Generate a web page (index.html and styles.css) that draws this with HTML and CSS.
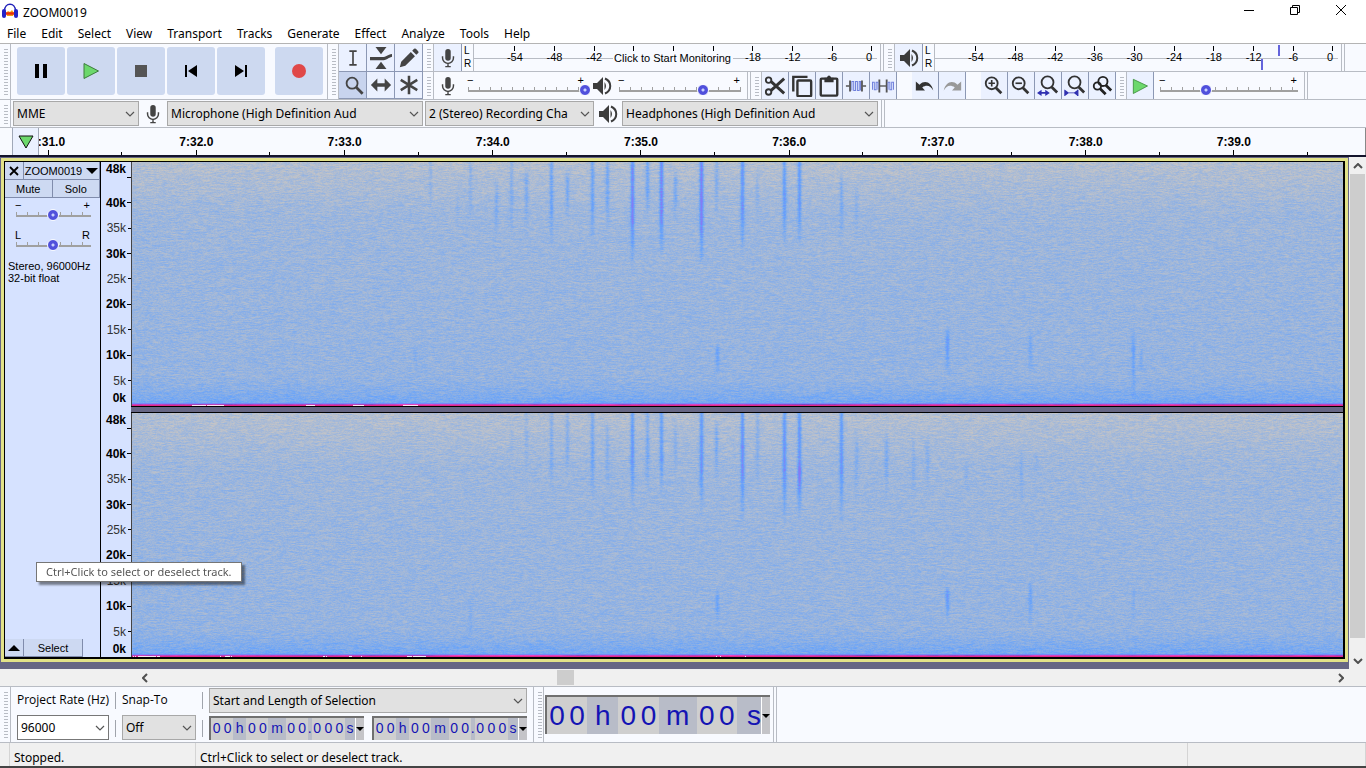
FILE: index.html
```html
<!DOCTYPE html>
<html lang="en">
<head>
    <meta charset="UTF-8">
    <meta name="viewport" content="width=device-width, initial-scale=1.0">
    <title>ZOOM0019</title>
    <link rel="stylesheet" href="styles.css">
</head>
<body>
    <!-- Shared icons -->
    <svg class="symbols" aria-hidden="true">
        <symbol id="mic" viewBox="0 0 20 22">
            <rect x="7" y="1" width="6" height="13" rx="3" fill="#444"/>
            <path d="M4 9v2a6 6 0 0 0 12 0V9M10 17v3M7 20.500h6" fill="none" stroke="#444" stroke-width="1.600"/>
        </symbol>
        <symbol id="speaker" viewBox="0 0 20 20">
            <path d="M1 7h4l6-6v18l-6-6H1z" fill="#3c3c3c"/>
            <path d="M12.500 6q3 4 0 8z" fill="#3c3c3c"/>
            <path d="M13 2.500c7 3 7 12 0 15" fill="none" stroke="#3c3c3c" stroke-width="2"/>
        </symbol>
        <symbol id="chevron" viewBox="0 0 10 6">
            <path d="M1 1l4 4 4-4" fill="none" stroke="#555" stroke-width="1.200"/>
        </symbol>
        <symbol id="glass" viewBox="0 0 24 24">
            <circle cx="9.500" cy="9" r="6.500" fill="none" stroke="#333" stroke-width="2"/>
            <path d="M14 14l6 6" stroke="#333" stroke-width="3"/>
        </symbol>
    </svg>

    <div class="app">
        <header class="titlebar">
            <svg class="logo" viewBox="0 0 16 16">
                <path d="M2.500 8c0-9 11-9 11 0" fill="#fff" stroke="#2020b8" stroke-width="1.600"/>
                <path d="M4 10l2-2 2 1 2-2 2 3-1 3H5z" fill="#f8a010"/>
                <path d="M4 10.500h8" stroke="#e83010" stroke-width="2.500"/>
                <rect x="0" y="6" width="4" height="9" rx="2" fill="#2424c8"/>
                <rect x="12" y="6" width="4" height="9" rx="2" fill="#2424c8"/>
            </svg>
            <span class="title">ZOOM0019</span>
            <button class="win-btn" aria-label="Minimize"><svg viewBox="0 0 12 12"><path d="M1 6.500h10" stroke="#000"/></svg></button>
            <button class="win-btn" aria-label="Restore"><svg viewBox="0 0 12 12"><path d="M1.500 3.500h7v7h-7zM3.500 3.500v-2h7v7h-2" fill="none" stroke="#000"/></svg></button>
            <button class="win-btn" aria-label="Close"><svg viewBox="0 0 12 12"><path d="M1 1l10 10M11 1L1 11" stroke="#000"/></svg></button>
        </header>

        <nav class="menu">
            <a href="#">File</a><a href="#">Edit</a><a href="#">Select</a><a href="#">View</a><a href="#">Transport</a><a href="#">Tracks</a><a href="#">Generate</a><a href="#">Effect</a><a href="#">Analyze</a><a href="#">Tools</a><a href="#">Help</a>
        </nav>

        <div class="toolbars">
            <div class="dock">
                <div class="bar">
                    <span class="grip"></span>
                    <div class="transport">
                        <button aria-label="Pause"><svg viewBox="0 0 16 16"><path d="M2 1h4v14H2zM10 1h4v14h-4z" fill="#000"/></svg></button>
                        <button aria-label="Play"><svg viewBox="0 0 16 16"><path d="M1 .5L15.500 8 1 15.500z" fill="#6cd86c" stroke="#3c7c3c"/></svg></button>
                        <button aria-label="Stop"><svg viewBox="0 0 16 16"><path d="M2 2h12v12H2z" fill="#555"/></svg></button>
                        <button aria-label="Skip to Start"><svg viewBox="0 0 16 16"><path d="M2 2h2v12H2zM14 2v12L5 8z" fill="#000"/></svg></button>
                        <button aria-label="Skip to End"><svg viewBox="0 0 16 16"><path d="M12 2h2v12h-2zM2 2v12l9-6z" fill="#000"/></svg></button>
                        <button class="record" aria-label="Record"><svg viewBox="0 0 16 16"><circle cx="8" cy="8" r="7" fill="#e04848"/></svg></button>
                    </div>
                </div>
                <div class="bar">
                    <span class="grip"></span>
                    <div class="tools">
                        <button class="tool" aria-label="Selection Tool"><svg viewBox="0 0 24 24"><path d="M8 4.500h3.500l.5.500.5-.5H16M12 5v14M8 19.500h3.500l.5-.5.5.500H16" fill="none" stroke="#444" stroke-width="1.800"/></svg></button>
                        <button class="tool" aria-label="Envelope Tool"><svg viewBox="0 0 24 24"><path d="M6 0h12l-6 8zM6 24h12l-6-8z" fill="#444"/><path d="M0 11h13c5 0 6-3 11-3.500v3c-4 1-6 4-11 4H0z" fill="#444"/></svg></button>
                        <button class="tool" aria-label="Draw Tool"><svg viewBox="0 0 24 24"><path d="M2 22l1.500-6L14 5.500l4.500 4.500L8 20.500zM15.500 4l2-2q1-1 2 0l2.500 2.500q1 1 0 2l-2 2z" fill="#444"/></svg></button>
                        <button class="tool active" aria-label="Zoom Tool"><svg viewBox="0 0 24 24"><circle cx="11" cy="10" r="6" fill="none" stroke="#444" stroke-width="2"/><path d="M15.500 14.500l7 7" stroke="#444" stroke-width="3"/></svg></button>
                        <button class="tool" aria-label="Time Shift Tool"><svg viewBox="0 0 24 24"><path d="M1 12l7-7v5h8V5l7 7-7 7v-5H8v5z" fill="#444"/></svg></button>
                        <button class="tool" aria-label="Multi-Tool"><svg viewBox="0 0 24 24"><path d="M12 2v20M3 6.500l18 11M21 6.500L3 17.500" stroke="#444" stroke-width="2.800"/></svg></button>
                    </div>
                </div>
                <div class="rows">
                    <div class="row">
                        <span class="grip"></span>
                        <button class="tool" aria-label="Record Meter"><svg><use href="#mic"/></svg></button>
                        <div class="lr"><span>L</span><span>R</span></div>
                        <div class="meter">
                            <span>-54</span><span>-48</span><span>-42</span><span></span><span></span><span></span><span>-18</span><span>-12</span><span>-6</span><span>0</span>
                            <button class="monitor">Click to Start Monitoring</button>
                        </div>
                        <span class="cap"></span>
                        <span class="grip"></span>
                        <button class="tool" aria-label="Playback Meter"><svg><use href="#speaker"/></svg></button>
                        <div class="lr"><span>L</span><span>R</span></div>
                        <div class="meter">
                            <span>-54</span><span>-48</span><span>-42</span><span>-36</span><span>-30</span><span>-24</span><span>-18</span><span>-12</span><span>-6</span><span>0</span>
                            <i class="peak left" style="left:85%"></i>
                            <i class="peak right" style="left:81%"></i>
                        </div>
                        <span class="cap"></span>
                    </div>
                    <div class="row">
                        <span class="grip"></span>
                        <span class="icon"><svg><use href="#mic"/></svg></span>
                        <div class="slider rec"><div><span>−</span><span>+</span></div><input type="range" aria-label="Recording Volume" value="100"></div>
                        <span class="icon spk"><svg><use href="#speaker"/></svg></span>
                        <div class="slider play"><div><span>−</span><span>+</span></div><input type="range" aria-label="Playback Volume" value="69"></div>
                        <span class="cap small"></span>
                        <span class="grip"></span>
                        <div class="edit spaced">
                            <button class="tool" aria-label="Cut"><svg viewBox="0 0 24 24"><path d="M7.500 7L22 20M7.500 17L22 4" stroke="#333" stroke-width="3.200"/><circle cx="5" cy="5.500" r="3" fill="none" stroke="#333" stroke-width="2"/><circle cx="5" cy="18.500" r="3" fill="none" stroke="#333" stroke-width="2"/></svg></button>
                            <button class="tool" aria-label="Copy"><svg viewBox="0 0 24 24"><rect x="7" y="6" width="15" height="17" rx="1" fill="none" stroke="#333" stroke-width="2.600"/><path d="M2.500 18V2H18" fill="none" stroke="#333" stroke-width="2.600"/></svg></button>
                            <button class="tool" aria-label="Paste"><svg viewBox="0 0 24 24"><rect x="3" y="4" width="18" height="18.500" rx="1" fill="none" stroke="#333" stroke-width="2.600"/><path d="M7 3h2.500q2.500-5 5 0H17v5H7z" fill="#333"/></svg></button>
                            <button class="tool" aria-label="Trim"><svg viewBox="0 0 24 24"><path d="M1 12h4M19 12h4" stroke="#555" stroke-width="1.500"/><path d="M5.500 6v12M18.500 6v12" stroke="#555" stroke-width="2"/><path d="M7.500 17V7h2v10h2V7h2v10h2V7h1.500v10" fill="none" stroke="#7080dc" stroke-width="1.100"/></svg></button>
                            <button class="tool" aria-label="Silence"><svg viewBox="0 0 24 24"><path d="M8 12h8" stroke="#555" stroke-width="1.500"/><path d="M8 5v14M16 5v14" stroke="#555" stroke-width="2"/><path d="M.5 16V8h2v8h2V8h2v8M17.500 16V8h2v8h2V8h2v8" fill="none" stroke="#7080dc" stroke-width="1.100"/></svg></button>
                        </div>
                        <div class="edit spaced">
                            <button class="tool" aria-label="Undo"><svg viewBox="0 0 24 24"><path d="M2 7v10h10l-3-3.500c5-3 9-2 12 3.500C19 8 12 5 6 10.500z" fill="#333"/></svg></button>
                            <button class="tool" aria-label="Redo"><svg viewBox="0 0 24 24"><path d="M22 7v10H12l3-3.500C10 10.500 6 11.500 3 17 5 8 12 5 18 10.500z" fill="#999"/></svg></button>
                        </div>
                        <div class="edit">
                            <button class="tool" aria-label="Zoom In"><svg viewBox="0 0 24 24"><use href="#glass"/><path d="M6 9h7M9.500 5.500v7" stroke="#333" stroke-width="1.800"/></svg></button>
                            <button class="tool" aria-label="Zoom Out"><svg viewBox="0 0 24 24"><use href="#glass"/><path d="M6 9h7" stroke="#333" stroke-width="1.800"/></svg></button>
                            <button class="tool" aria-label="Fit Selection"><svg viewBox="0 0 24 24"><use href="#glass" x="2" y="-1"/><path d="M0 19.500l5-3.500v2.500h4V16l5 3.500L9 23v-2.500H5V23z" fill="#3030b0"/></svg></button>
                            <button class="tool" aria-label="Fit Project"><svg viewBox="0 0 24 24"><use href="#glass" x="2" y="-1"/><path d="M0 16v7M15 16v7" stroke="#3030b0" stroke-width="1.500"/><path d="M1 16l4 3h6l4-3v7l-4-3H5l-4 3z" fill="#3030b0"/></svg></button>
                            <button class="tool" aria-label="Zoom Toggle"><svg viewBox="0 0 24 24"><circle cx="13" cy="7" r="5" fill="none" stroke="#222" stroke-width="2"/><circle cx="7" cy="12" r="4" fill="none" stroke="#222" stroke-width="2"/><path d="M16 11l6 6M10 15l6 6" stroke="#222" stroke-width="3"/></svg></button>
                        </div>
                        <span class="grip"></span>
                        <button class="tool narrow" aria-label="Play-at-Speed"><svg viewBox="0 0 24 24"><path d="M4 4l17 8-17 9z" fill="#6cd86c" stroke="#3c8c3c"/></svg></button>
                        <div class="slider speed"><div><span>−</span><span>+</span></div><input type="range" aria-label="Playback Speed" value="33"></div>
                        <span class="cap small"></span>
                    </div>
                </div>
            </div>
            <div class="row devices">
                <span class="grip"></span>
                <div class="combo host"><select aria-label="Audio Host"><option>MME</option></select><svg><use href="#chevron"/></svg></div>
                <span class="icon"><svg><use href="#mic"/></svg></span>
                <div class="combo input"><select aria-label="Recording Device"><option>Microphone (High Definition Aud</option></select><svg><use href="#chevron"/></svg></div>
                <div class="combo channels"><select aria-label="Recording Channels"><option>2 (Stereo) Recording Cha</option></select><svg><use href="#chevron"/></svg></div>
                <span class="icon"><svg><use href="#speaker"/></svg></span>
                <div class="combo output"><select aria-label="Playback Device"><option>Headphones (High Definition Aud</option></select><svg><use href="#chevron"/></svg></div>
                <span class="cap"></span>
            </div>
        </div>

        <div class="timeline">
            <button class="pin" aria-label="Pinned Play Head"><svg viewBox="0 0 16 14"><path d="M1 1h14L8 13z" fill="#6cd86c" stroke="#111"/></svg></button>
            <div class="times">
                <span>7:31.0</span><span>7:32.0</span><span>7:33.0</span><span>7:34.0</span><span>7:35.0</span><span>7:36.0</span><span>7:37.0</span><span>7:38.0</span><span>7:39.0</span>
            </div>
        </div>

        <main class="workspace">
            <div class="pane">
                <div class="track">
                    <div class="inner">
                        <section class="controls">
                            <div class="btn-row">
                                <button class="close" aria-label="Close Track"><svg viewBox="0 0 10 10"><path d="M1 1l8 8M9 1L1 9" stroke="#000" stroke-width="1.800"/></svg></button>
                                <button class="name">ZOOM0019 <svg viewBox="0 0 12 6"><path d="M0 0h12L6 6z"/></svg></button>
                            </div>
                            <div class="btn-row"><button>Mute</button><button>Solo</button></div>
                            <div class="slider gain"><div><span>−</span><span>+</span></div><input type="range" aria-label="Gain" value="49"></div>
                            <div class="slider pan"><div><span>L</span><span>R</span></div><input type="range" aria-label="Pan" value="49"></div>
                            <p>Stereo, 96000Hz<br>32-bit float</p>
                            <div class="btn-row bottom">
                                <button class="close" aria-label="Collapse"><svg class="wide" viewBox="0 0 12 6"><path d="M0 6h12L6 0z"/></svg></button>
                                <button class="select">Select</button>
                            </div>
                        </section>
                        <div class="channels-view">
                            <div class="channel">
                                <div class="scale"><b>48k</b><b>40k</b><span>35k</span><b>30k</b><span>25k</span><b>20k</b><span>15k</span><b>10k</b><span>5k</span><b>0k</b></div>
                                <canvas id="left"></canvas>
                            </div>
                            <div class="divider"></div>
                            <div class="channel">
                                <div class="scale"><b>48k</b><b>40k</b><span>35k</span><b>30k</b><span>25k</span><b>20k</b><span>15k</span><b>10k</b><span>5k</span><b>0k</b></div>
                                <canvas id="right"></canvas>
                            </div>
                        </div>
                    </div>
                </div>
                <div class="tooltip" role="tooltip">Ctrl+Click to select or deselect track.</div>
            </div>
            <div class="vscroll">
                <button aria-label="Scroll up"><svg viewBox="0 0 10 6"><path d="M1 5l4-4 4 4" fill="none" stroke="#505050" stroke-width="2"/></svg></button>
                <div class="thumb"></div>
                <button aria-label="Scroll down"><svg viewBox="0 0 10 6"><path d="M1 1l4 4 4-4" fill="none" stroke="#505050" stroke-width="2"/></svg></button>
            </div>
        </main>

        <div class="hscroll">
            <button aria-label="Scroll left"><svg viewBox="0 0 6 10"><path d="M5 1L1 5l4 4" fill="none" stroke="#505050" stroke-width="2"/></svg></button>
            <div class="rail"><div class="thumb" style="margin-left:34.3%"></div></div>
            <button aria-label="Scroll right"><svg viewBox="0 0 6 10"><path d="M1 1l4 4-4 4" fill="none" stroke="#505050" stroke-width="2"/></svg></button>
        </div>

        <div class="selection-bar">
            <span class="grip"></span>
            <div class="field rate">
                <label for="rate">Project Rate (Hz)</label>
                <div class="combo white"><select id="rate"><option>96000</option></select><svg><use href="#chevron"/></svg></div>
            </div>
            <div class="seps"><i></i><i></i></div>
            <div class="field snap">
                <label for="snap">Snap-To</label>
                <div class="combo"><select id="snap"><option>Off</option></select><svg><use href="#chevron"/></svg></div>
            </div>
            <div class="seps"><i></i><i></i></div>
            <div class="field range">
                <div class="combo"><select aria-label="Selection Mode"><option>Start and Length of Selection</option></select><svg><use href="#chevron"/></svg></div>
                <div class="times-row">
                    <div class="time"><span>0</span><span>0</span><em>h</em><span>0</span><span>0</span><em class="m">m</em><span>0</span><span>0</span><em class="dot">.</em><span>0</span><span>0</span><span>0</span><em class="s">s</em><button aria-label="Start format"><svg viewBox="0 0 8 4"><path d="M0 0h8L4 4z"/></svg></button></div>
                    <div class="time"><span>0</span><span>0</span><em>h</em><span>0</span><span>0</span><em class="m">m</em><span>0</span><span>0</span><em class="dot">.</em><span>0</span><span>0</span><span>0</span><em class="s">s</em><button aria-label="Length format"><svg viewBox="0 0 8 4"><path d="M0 0h8L4 4z"/></svg></button></div>
                </div>
            </div>
            <span class="grip divided"></span>
            <div class="time big"><span>0</span><span>0</span><em>h</em><span>0</span><span>0</span><em class="m">m</em><span>0</span><span>0</span><em class="s">s</em><button aria-label="Position format"><svg viewBox="0 0 8 4"><path d="M0 0h8L4 4z"/></svg></button></div>
            <span class="cap small"></span>
        </div>

        <footer class="status">
            <span class="state">Stopped.</span>
            <span class="hint">Ctrl+Click to select or deselect track.</span>
            <span class="spare"></span>
        </footer>
    </div>

    <script src="script.js"></script>
</body>
</html>
```

FILE: styles.css
```css
* {
    box-sizing: border-box;
}

body {
    margin: 0;
    font-family: "Noto Sans", "Open Sans", sans-serif;
    font-size: 12px;
    color: #000;
    background: #fff;
}

button,
select,
input {
    font: inherit;
    color: inherit;
    margin: 0;
    padding: 0;
    border: 0;
    border-radius: 0;
    background: none;
}

button {
    display: flex;
    align-items: center;
    justify-content: center;
}

svg {
    display: block;
    flex: none;
}

.symbols {
    width: 0;
    height: 0;
    position: absolute;
}

.app {
    display: flex;
    flex-direction: column;
    height: 100vh;
    border-bottom: 2px solid #444;
}

/* Title bar and menu */
.titlebar {
    display: flex;
    align-items: center;
    height: 24px;
    flex: none;
}

.logo {
    width: 16px;
    height: 16px;
    margin: 0 5px 2px 2px;
}

.title {
    flex: 1;
}

.win-btn {
    width: 46px;
    height: 20px;
    align-self: flex-start;
}

.win-btn:last-child {
    margin-right: 2px;
}

.win-btn svg {
    width: 12px;
    height: 12px;
}

.menu {
    display: flex;
    align-items: center;
    gap: 15px;
    height: 19px;
    padding-left: 7px;
    flex: none;
}

.menu a {
    color: #000;
    text-decoration: none;
}

/* Toolbars */
.toolbars {
    flex: none;
    background: #f8faff;
    border-top: 1px solid #b4b4b4;
}

.dock,
.bar,
.row {
    display: flex;
}

.bar {
    height: 56px;
    border-bottom: 1px solid #b8bcc4;
}

.rows {
    flex: 1;
}

.row {
    height: 28px;
    align-items: stretch;
    border-bottom: 1px solid #b8bcc4;
}

.grip {
    flex: none;
    width: 11px;
    border-right: 1px solid #b8bcc4;
    background: repeating-linear-gradient(#f8faff 0 2px, #b8bcc4 2px 3px) 4px 3px / 4px calc(100% - 6px) no-repeat;
}

.cap {
    flex: none;
    width: 4px;
    margin-left: 3px;
    border: solid #b8bcc4;
    border-width: 0 1px;
}

.cap.small {
    margin-left: 0;
}

.transport {
    display: flex;
    align-items: flex-start;
    gap: 2px;
    padding: 3px 4px 0 6px;
    border-right: 1px solid #b8bcc4;
}

.transport button {
    width: 48px;
    height: 48px;
    border-radius: 3px;
    background: #cdd9f0;
}

.transport svg {
    width: 16px;
    height: 16px;
}

.transport .record {
    margin-left: 8px;
}

.tools {
    display: grid;
    grid-template-columns: repeat(3, 28px);
    grid-template-rows: 28px 27px;
}

.tool {
    width: 28px;
    background: #ebf1ff;
    border: solid #8c98b4;
    border-width: 0 1px 1px 0;
}

.row .tool {
    border-bottom-width: 0;
}

.tool.active {
    background: #c8d4ee;
}

.tool svg,
.icon svg {
    width: 20px;
    height: 20px;
}

.tools svg {
    width: 22px;
    height: 22px;
}

.edit {
    display: flex;
}

.edit.spaced {
    margin-right: 15px;
}

.edit .tool,
.tool.narrow {
    width: 27px;
}

.edit svg {
    width: 22px;
    height: 22px;
}

.icon {
    display: flex;
    align-items: center;
    justify-content: center;
    width: 28px;
}

.icon.spk {
    width: 22px;
}

.lr {
    width: 11px;
    display: flex;
    flex-direction: column;
    justify-content: space-evenly;
    padding-left: 2px;
    font: 10px/12px "Liberation Sans", sans-serif;
}

/* Level meters, one column for every 6 dB */
.meter {
    position: relative;
    width: 404px;
    display: grid;
    grid-template-columns: repeat(9, minmax(0, 2fr)) minmax(0, 1fr);
    padding: 0 5px 0 21px;
    border-left: 1px solid #b8bcc4;
    background: linear-gradient(#b8bcc4, #b8bcc4) 0 14px / 100% 1px no-repeat;
    font: 11px/12px "Liberation Sans", sans-serif;
}

.meter span {
    display: flex;
    flex-direction: column;
    align-items: center;
}

.meter span::before {
    content: "";
    width: 1px;
    height: 5px;
    margin-top: 2px;
    background: #000;
}

.meter span:nth-of-type(10) {
    align-items: flex-end;
}

.monitor {
    position: absolute;
    inset: 8px 6px auto 0;
    margin: auto;
    width: 120px;
    white-space: nowrap;
    background: #f8faff;
}

.peak {
    position: absolute;
    width: 2px;
    height: 11px;
    background: #6464dc;
}

.peak.left {
    top: 1px;
}

.peak.right {
    bottom: 1px;
}

/* Sliders */
.slider {
    font: 11px/8px "Liberation Sans", sans-serif;
    padding-top: 4px;
}

.slider div {
    display: flex;
    justify-content: space-between;
    padding: 0 7px 0 5px;
}

.slider input {
    appearance: none;
    display: block;
    width: 100%;
    height: 12px;
    background:
        linear-gradient(#a0a0a0, #a0a0a0) 6px 6px / calc(100% - 12px) 2px no-repeat,
        repeating-linear-gradient(90deg, #a0a0a0 0 1px, transparent 1px 11px) 6px 3px / calc(100% - 12px) 3px no-repeat;
}

.slider input::-webkit-slider-thumb {
    appearance: none;
    width: 12px;
    height: 12px;
    border: 1px solid #f8faff;
    border-radius: 50%;
    background: radial-gradient(#c8d0ff 0 1px, #5050dc 2px);
}

.slider.rec {
    width: 129px;
}

.slider.play {
    width: 134px;
}

.slider.speed {
    width: 150px;
}

/* Drop-downs */
.combo {
    display: grid;
    align-items: center;
    height: 25px;
    border: 1px solid #a8a8a8;
    background: #e1e1e1;
}

.combo select,
.combo svg {
    grid-area: 1 / 1;
}

.combo select {
    appearance: none;
    width: 100%;
    height: 100%;
    padding: 0 16px 0 3px;
}

.combo svg {
    width: 10px;
    height: 6px;
    margin-right: 3px;
    justify-self: end;
    pointer-events: none;
}

.combo.white {
    background: #fff;
    border-color: #777;
}

.devices {
    align-items: center;
}

.devices .grip,
.devices .cap {
    align-self: stretch;
}

.host {
    width: 126px;
    margin-left: 2px;
}

.input {
    width: 256px;
    margin-right: 2px;
}

.channels {
    width: 169px;
}

.output {
    width: 256px;
}

/* Time ruler */
.timeline {
    display: flex;
    flex: none;
    height: 29px;
    padding-left: 12px;
    background: #f8faff;
    border-bottom: 2px solid #14142c;
}

.pin {
    width: 27px;
    border: solid #a0a8b8;
    border-width: 0 1px;
    background: #ebf1ff;
}

.pin svg {
    width: 16px;
    height: 14px;
}

.times {
    flex: 1;
    display: flex;
    overflow: hidden;
    padding-right: 57px;
    border-right: 1px solid #888;
    font: bold 12px/14px "Liberation Sans", sans-serif;
}

.times span {
    flex: 1;
    display: flex;
    flex-direction: column;
    align-items: center;
    padding-top: 7px;
    background: linear-gradient(#000, #000) 100% 100% / 1px 3px no-repeat;
}

.times span::after {
    content: "";
    width: 1px;
    height: 5px;
    margin-top: auto;
    background: #000;
}

.times span:first-child {
    margin-left: -65px;
}

/* Track */
.workspace {
    flex: 1;
    min-height: 0;
    display: flex;
}

.pane {
    position: relative;
    flex: 1;
    min-width: 0;
    display: flex;
    padding: 1px 1px 7px;
    background: #666684;
}

.track {
    flex: 1;
    min-width: 0;
    display: flex;
    border: 3px solid #e2e288;
}

.inner {
    flex: 1;
    min-width: 0;
    display: flex;
    border: solid #000;
    border-width: 1px 2px 2px 1px;
}

.controls {
    display: flex;
    flex-direction: column;
    width: 96px;
    border-right: 1px solid #000;
    background: #d6e2ff;
    font: 11px/12px "Liberation Sans", sans-serif;
}

.btn-row {
    display: flex;
    height: 18px;
}

.btn-row button {
    flex: 1;
    background: #cdd9f2;
    border: solid #808cac;
    border-width: 0 1px 1px 0;
}

.btn-row .close {
    flex: none;
    width: 19px;
}

.close svg {
    width: 10px;
    height: 10px;
}

.close .wide {
    width: 12px;
    height: 6px;
}

.name {
    gap: 4px;
}

.name svg {
    width: 12px;
    height: 6px;
}

.btn-row .select {
    flex: none;
    width: 59px;
}

.bottom {
    margin-top: auto;
}

.gain,
.pan {
    margin-left: 5px;
    width: 87px;
}

.gain {
    padding-top: 3px;
}

.pan {
    padding-top: 10px;
}

.controls p {
    margin: 9px 0 0 3px;
}

.channels-view {
    flex: 1;
    min-width: 0;
    display: flex;
    flex-direction: column;
    background: #d6e2ff;
}

.channel {
    flex: 1;
    min-height: 0;
    display: flex;
}

.channel canvas {
    flex: 1;
    min-width: 0;
    width: 0;
    height: 100%;
}

/* Frequency scale: 48 kHz split into 5 kHz rows */
.scale {
    width: 31px;
    display: flex;
    flex-direction: column;
    border-right: 1px solid #444;
    font: 12px/14px "Liberation Sans", sans-serif;
    color: #333;
}

.scale b,
.scale span {
    flex: 5 1 0;
    min-height: 0;
    display: flex;
    align-items: center;
    justify-content: flex-end;
    gap: 1px;
}

.scale b {
    color: #000;
}

.scale b::after,
.scale span::after {
    content: "";
    width: 4px;
    height: 1px;
    background: #000;
}

.scale span::after {
    width: 3px;
    margin-left: 1px;
}

.scale b:first-child {
    flex-grow: 5.5;
    align-items: flex-start;
}

.scale b:first-child::after {
    margin-top: 15px;
}

.scale b:last-child {
    flex-grow: 2.5;
    align-items: flex-start;
    line-height: 10px;
}

.scale b:last-child::after {
    visibility: hidden;
}

.divider {
    height: 7px;
    margin-left: 30px;
    border: solid #000;
    border-width: 1px 0;
    background: #666684;
}

.tooltip {
    position: absolute;
    left: 36px;
    bottom: 87px;
    padding: 0 9px;
    font-size: 11px;
    line-height: 18px;
    border: 1px solid #767676;
    background: #fff;
    color: #575757;
    box-shadow: 3px 3px 2px rgba(0, 0, 0, 0.45);
}

/* Scroll bars */
.vscroll {
    width: 17px;
    display: flex;
    flex-direction: column;
    background: #f0f0f0;
}

.vscroll button {
    height: 17px;
}

.vscroll svg {
    width: 10px;
    height: 6px;
}

.vscroll .thumb {
    height: 464px;
    margin: 0 1px auto;
    background: #cdcdcd;
}

.hscroll {
    display: flex;
    flex: none;
    height: 17px;
    padding: 0 17px 0 136px;
    background: #f0f0f0;
}

.hscroll button {
    width: 17px;
}

.hscroll svg {
    width: 6px;
    height: 10px;
}

.rail {
    flex: 1;
    padding: 1px 0;
}

.rail .thumb {
    width: 17px;
    height: 15px;
    background: #cdcdcd;
}

/* Selection toolbar */
.selection-bar {
    display: flex;
    flex: none;
    height: 57px;
    background: #f8faff;
    border: solid #b8bcc4;
    border-width: 1px 0;
}

.field {
    display: flex;
    flex-direction: column;
    justify-content: space-between;
    padding: 1px 0 2px;
}

.field label {
    font-family: "Open Sans", "Noto Sans", sans-serif;
    line-height: 24px;
}

.rate {
    width: 92px;
    margin-left: 6px;
}

.snap {
    width: 74px;
}

.range {
    width: 318px;
}

.rate label {
    white-space: nowrap;
}

.seps {
    width: 13px;
    display: flex;
    flex-direction: column;
    justify-content: space-around;
    align-items: center;
}

.seps i {
    width: 1px;
    height: 17px;
    background: #a0a4ac;
}

.times-row {
    display: flex;
    gap: 8px;
}

.time {
    flex: 1;
    display: flex;
    height: 24px;
    border: solid #707070;
    border-width: 2px 0 0 2px;
    background: #cfcfcf;
    color: #1414b4;
    font: 14px/20px "Liberation Sans", sans-serif;
}

.time span,
.time em {
    flex: 11;
    text-align: center;
    font-style: normal;
}

.time em {
    flex: 13;
    background: #b8bcc8;
}

.time .m {
    flex-grow: 17;
}

.time .dot {
    flex: 4;
}

.time .s {
    flex: 10;
}

.time button {
    width: 9px;
    border-left: 1px solid #fff;
    background: #c4c4c8;
}

.time svg {
    width: 8px;
    height: 4px;
}

.divided {
    margin-left: 6px;
    border-left: 1px solid #b8bcc4;
}

.time.big {
    flex: none;
    align-self: center;
    width: 225px;
    height: 39px;
    margin: 0 3px 0 1px;
    font-size: 28px;
    line-height: 37px;
}

.big span {
    flex: 20;
}

.big em {
    flex: 31;
}

.big .m {
    flex: 38;
}

.big .s {
    flex: 24;
    text-align: right;
}

/* Status bar */
.status {
    display: flex;
    flex: none;
    height: 23px;
    padding-left: 9px;
    line-height: 29px;
    background: #f0f0f0;
    overflow: hidden;
}

.status span {
    padding-left: 4px;
    border-left: 1px solid #d4d4d4;
}

.state {
    width: 186px;
}

.hint {
    flex: 1;
}

.spare {
    width: 179px;
    border-right: 1px solid #d4d4d4;
}
```

FILE: script.js
```javascript
// Calls in each channel: [x, top, bottom, strength], on a 1212 x 244 grid
const calls = {
    left: [
        [298, 0, 50, 0.3], [325, 20, 70, 0.15], [338, 0, 70, 0.3], [364, 15, 80, 0.4],
        [379, 0, 75, 0.4], [394, 5, 65, 0.5], [419, 0, 85, 0.65], [435, 5, 60, 0.5],
        [460, 0, 85, 0.7], [475, 0, 70, 0.55], [500, 0, 105, 1.2], [515, 0, 55, 0.7],
        [529, 0, 95, 1.2], [543, 5, 60, 0.55], [569, 0, 105, 1.3], [584, 0, 60, 0.4],
        [611, 0, 95, 0.95], [626, 5, 65, 0.25], [653, 0, 90, 0.8], [668, 0, 85, 0.85],
        [710, 5, 85, 0.45], [725, 20, 75, 0.25], [283, 185, 205, 0.2], [162, 165, 200, 0.12],
        [585, 180, 215, 0.5], [816, 165, 212, 0.7], [899, 165, 215, 0.35],
        [1002, 165, 242, 0.5], [1010, 185, 215, 0.25]
    ],
    right: [
        [379, 10, 50, 0.15], [394, 0, 60, 0.25], [419, 0, 80, 0.4], [435, 0, 65, 0.4],
        [460, 0, 90, 0.6], [475, 5, 80, 0.35], [500, 0, 95, 0.85], [515, 0, 80, 0.55],
        [529, 0, 85, 0.8], [543, 5, 60, 0.35], [569, 0, 105, 0.9], [584, 5, 70, 0.5],
        [611, 0, 112, 1], [626, 0, 80, 0.35], [653, 0, 112, 0.95], [668, 0, 112, 0.9],
        [668, 48, 85, 0.5], [710, 0, 112, 0.85], [725, 15, 85, 0.35], [755, 15, 90, 0.4],
        [782, 20, 95, 0.3], [796, 20, 80, 0.3], [835, 45, 80, 0.2], [890, 35, 100, 0.25],
        [905, 35, 65, 0.2], [338, 180, 230, 0.2], [585, 175, 215, 0.45],
        [816, 172, 208, 0.7], [899, 165, 218, 0.45], [1002, 170, 215, 0.25]
    ]
};

let seed = 19;

function random() {
    seed = (seed * 1664525 + 1013904223) >>> 0;
    return seed / 4294967296;
}

// Quiet is grey, then blue, then violet
function colour(v) {
    v = Math.max(0, v);
    if (v < 1) {
        return [196 - 94 * v, 196 - 34 * v, 198 + 52 * v];
    }
    const k = Math.min(1, (v - 1) * 2);
    return [102 + 30 * k, 162 - 38 * k, 250 - 5 * k];
}

function drawSpectrogram(id) {
    const canvas = document.getElementById(id);
    const w = canvas.width = canvas.clientWidth;
    const h = canvas.height = canvas.clientHeight;
    const ctx = canvas.getContext('2d');
    const image = ctx.createImageData(w, h);
    const level = new Float32Array(w * h);

    for (let y = 0; y < h; y++) {
        const f = y / h;
        const edge = h - y;
        let base = 0.18 + 0.2 * Math.min(1, f / 0.22) + 0.14 * f;
        if (edge < 32) {
            base += 0.42 * Math.pow((32 - edge) / 32, 1.6);
        }
        let noise = 0;
        for (let x = 0; x < w; x++) {
            noise = noise * 0.62 + (random() - 0.5) * 0.28;
            level[y * w + x] = base + noise;
        }
    }

    calls[id].forEach(([cx, top, bottom, strength]) => {
        const mid = Math.round(cx * w / 1212);
        const y0 = Math.round(top * h / 244);
        const y1 = Math.round(bottom * h / 244);
        for (let y = y0; y < Math.min(y1, h); y++) {
            const k = (y - y0) / (y1 - y0);
            const fade = Math.min(1, (1 - k) * 2, top ? k * 4 + 0.1 : 1);
            for (let dx = -4; dx <= 4; dx++) {
                level[y * w + mid + dx] += strength * 0.9 * fade * Math.exp(-dx * dx / 4);
            }
        }
    });

    for (let y = 0; y < h; y++) {
        const edge = h - y;
        let hum = 0;
        for (let x = 0; x < w; x++) {
            const i = (y * w + x) * 4;
            let rgb = colour(level[y * w + x]);
            hum = hum * 0.96 + (random() - 0.5);
            if (edge === 1) {
                // Loudest at the start of the view, where it clips to white
                rgb = hum > 0.6 + 3 * x / w ? [255, 225, 240] : [225, 40, 140];
            } else if (edge === 2) {
                rgb = [190 + hum * 20, 70, 190];
            } else if (edge === 3) {
                rgb = [120, 135, 248];
            }
            image.data.set([rgb[0], rgb[1], rgb[2], 255], i);
        }
    }
    ctx.putImageData(image, 0, 0);
}

function drawAll() {
    seed = 19;
    drawSpectrogram('left');
    drawSpectrogram('right');
}

window.addEventListener('resize', drawAll);
drawAll();
```
